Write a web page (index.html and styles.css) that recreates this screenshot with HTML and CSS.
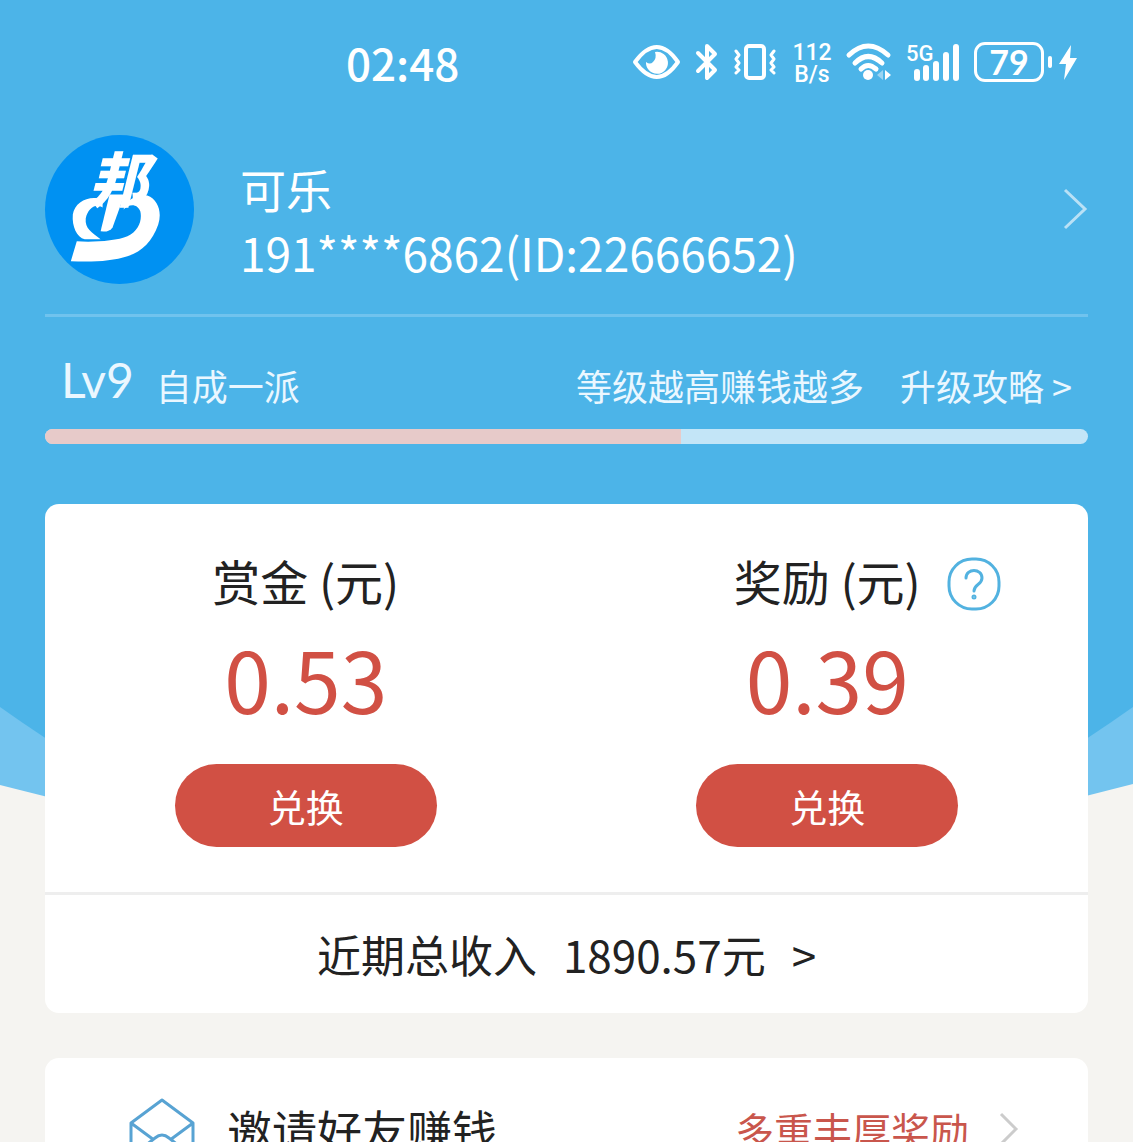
FILE: index.html
```
<!DOCTYPE html>
<html lang="zh-CN">
<head>
  <meta charset="UTF-8">
  <meta name="viewport" content="width=device-width, initial-scale=1">
  <title>我的</title>
  <link rel="stylesheet" href="styles.css">
</head>
<body>
  <!-- Curved header background -->
  <svg class="backdrop" viewBox="0 0 1133 920" preserveAspectRatio="none" aria-hidden="true">
    <path fill="#73c4ef" d="M0 0H1133V784Q566 936 0 785Z"/>
    <path fill="#4cb4e8" d="M0 0H1133V707Q566 1110 0 707Z"/>
  </svg>

  <!-- Status bar -->
  <div class="status-bar">
    <span class="time">02:48</span>
    <div class="status-icons">
      <svg width="48" height="38" viewBox="0 0 48 38">
        <path d="M3 19Q25 -11 46 19Q25 49 3 19Z" fill="none" stroke="#fff" stroke-width="4" stroke-linejoin="round"/>
        <path d="M23 9A11 11 0 1 1 14 19Q18 22 21 19Q25 15 23 9Z" fill="#fff"/>
      </svg>
      <svg width="24" height="38" viewBox="0 0 24 38">
        <path d="M3 10L20 27L12 35V3L20 11L3 28" fill="none" stroke="#fff" stroke-width="4" stroke-linecap="round" stroke-linejoin="round"/>
      </svg>
      <svg width="44" height="38" viewBox="0 0 44 38" fill="none" stroke="#fff" stroke-width="4" stroke-linecap="round" stroke-linejoin="round">
        <rect x="12" y="3" width="18" height="32" rx="3"/>
        <path stroke-width="3" d="M2 8L5 12L2 16L5 20L2 24L5 27L2 30M40 8L37 12L40 16L37 20L40 24L37 27L40 30"/>
      </svg>
      <div class="speed">
        <span>112</span>
        <span>B/s</span>
      </div>
      <svg width="45" height="38" viewBox="0 0 45 38">
        <path d="M3 12Q22 -6 42 12M9 20Q22 7 36 20M15 26Q22 19 30 26" fill="none" stroke="#fff" stroke-width="5" stroke-linecap="round"/>
        <circle cx="22" cy="32" r="5" fill="#fff"/>
        <path d="M37 27V37L31 32Z" fill="#9bd5f3"/>
        <path d="M39 27V37L45 32Z" fill="#fff"/>
      </svg>
      <svg width="53" height="38" viewBox="0 0 53 38">
        <text class="network" x="0" y="18">5G</text>
        <path d="M11 29V35M20 25V35M30 21V35M40 12V35M50 4V35" stroke="#fff" stroke-width="6" stroke-linecap="round"/>
      </svg>
      <div class="power">
        <span class="battery">79</span>
        <svg width="18" height="38" viewBox="0 0 18 38">
          <path d="M12 2L0 21H7L5 37L18 15H11Z" fill="#fff"/>
        </svg>
      </div>
    </div>
  </div>

  <main>
    <!-- Profile -->
    <a class="profile" href="#">
      <svg class="avatar" viewBox="0 0 150 150" role="img" aria-label="头像">
        <circle cx="75" cy="75" r="75" fill="#0091f2"/>
        <text class="avatar-text" x="44" y="67">邦</text>
        <path d="M65 60H80L68 93Q65 98 56 97Z" fill="#fff"/>
        <path d="M58 65C45 60 30 67 28 80C27 92 32 103 40 105H56C47 98 40 94 41 84C43 75 50 68 58 73Z" fill="#fff"/>
        <path d="M79 75C82 65 92 60 103 61C114 65 118 78 114 90C108 107 98 117 83 122C68 127 48 128 26 127L32 107C47 108 72 107 83 102C94 97 98 86 96 77C93 69 85 69 79 75Z" fill="#fff"/>
      </svg>
      <div class="profile-info">
        <div>可乐</div>
        <div>191****6862(ID:22666652)</div>
      </div>
      <svg class="arrow" width="26" height="44" viewBox="0 0 26 44">
        <path d="M3 3L23 22L3 41"/>
      </svg>
    </a>

    <!-- Level -->
    <section class="level">
      <div class="level-text">
        <span class="level-num">Lv9</span>
        <span>自成一派</span>
        <span class="level-tip">等级越高赚钱越多</span>
        <a href="#">升级攻略 &gt;</a>
      </div>
      <div class="level-bar" role="progressbar" aria-label="等级进度" aria-valuenow="61" aria-valuemin="0" aria-valuemax="100">
        <div class="level-fill" style="width: 61%"></div>
      </div>
    </section>

    <!-- Balance -->
    <section class="card balance">
      <div class="accounts">
        <div class="account">
          <h2><span>赏金 (元)</span></h2>
          <div class="amount">0.53</div>
          <button type="button" class="exchange">兑换</button>
        </div>
        <div class="account">
          <h2>
            <span>奖励 (元)</span>
            <button type="button" class="help" aria-label="奖励说明">
              <svg width="54" height="54" viewBox="0 0 54 54" fill="none" stroke="#52b2e0" stroke-width="3" stroke-linecap="round">
                <rect x="2" y="2" width="50" height="50" rx="23"/>
                <path d="M19 21C19 11 35 11 35 21C35 28 27 27 27 34"/>
                <circle cx="27" cy="40" r="1"/>
              </svg>
            </button>
          </h2>
          <div class="amount">0.39</div>
          <button type="button" class="exchange">兑换</button>
        </div>
      </div>
      <a class="income" href="#">
        <span>近期总收入</span>
        <span>1890.57元</span>
        <span>&gt;</span>
      </a>
    </section>

    <!-- Menu -->
    <nav class="card">
      <a class="menu-item" href="#">
        <svg width="66" height="62" viewBox="0 0 66 62" fill="none" stroke="#58a3d3" stroke-width="3" stroke-linejoin="round">
          <path d="M2 25L33 2L64 25V59H2ZM2 25L25 42M64 25L41 42M2 59L26 40Q33 34 40 40L64 59"/>
        </svg>
        <span>邀请好友赚钱</span>
        <span class="menu-note">多重丰厚奖励</span>
        <svg class="arrow gray" width="20" height="34" viewBox="0 0 20 34">
          <path d="M2 2L17 17L2 32"/>
        </svg>
      </a>
    </nav>
  </main>
</body>
</html>
```
FILE: styles.css
```
/* Basic reset */
* {
  box-sizing: border-box;
}
body {
  margin: 0;
  height: 100vh;
  overflow: hidden;
  position: relative;
  display: flex;
  flex-direction: column;
  background: #f5f4f1;
  color: #222;
  font-family: "Noto Sans CJK SC", sans-serif;
}
a {
  color: inherit;
  text-decoration: none;
}
button {
  font-family: inherit;
  border: none;
  padding: 0;
  cursor: pointer;
}
svg {
  display: block;
  flex-shrink: 0;
  overflow: visible;
}
.backdrop {
  position: absolute;
  top: 0;
  left: 0;
  width: 100%;
  height: 920px;
  z-index: -1;
}
/* Status bar */
.status-bar {
  display: flex;
  justify-content: space-between;
  align-items: center;
  flex-shrink: 0;
  height: 124px;
  padding: 0 56px 0 30%;
  color: #fff;
}
.time {
  font-size: 44px;
  font-weight: 500;
  padding-left: 6px;
}
.status-icons {
  display: flex;
  align-items: center;
  gap: 15px;
}
.speed {
  display: flex;
  flex-direction: column;
  align-items: center;
  width: 38px;
  padding-top: 4px;
  font-family: Roboto, sans-serif;
  font-size: 23px;
  font-weight: 500;
  line-height: 22px;
}
.network {
  font-family: Roboto, sans-serif;
  font-size: 22px;
  font-weight: 500;
  fill: #fff;
}
.power {
  display: flex;
  align-items: center;
  gap: 7px;
}
.battery {
  position: relative;
  width: 70px;
  height: 40px;
  margin-right: 8px;
  border: 3px solid #fff;
  border-radius: 11px;
  font-family: Lato, sans-serif;
  font-size: 34px;
  font-weight: 700;
  line-height: 34px;
  text-align: center;
}
.battery::after {
  content: "";
  position: absolute;
  top: 11px;
  right: -11px;
  width: 4px;
  height: 12px;
  border-radius: 2px;
  background: #fff;
}
main {
  flex: 1;
  min-height: 0;
  overflow-y: auto;
  scrollbar-width: none;
  padding: 10px 45px 0;
}
/* Profile */
.profile {
  display: flex;
  align-items: center;
  padding-bottom: 30px;
  border-bottom: 3px solid #70c3ee;
  color: #fff;
}
.avatar {
  width: 149px;
  height: 149px;
}
.avatar-text {
  font-size: 60px;
  font-weight: 900;
  font-style: italic;
  fill: #fff;
}
.profile-info {
  flex: 1;
  padding: 22px 0 0 46px;
  font-size: 46px;
  line-height: 64px;
}
.arrow path {
  fill: none;
  stroke: #b9e1f6;
  stroke-width: 3;
}
.arrow.gray path {
  stroke: #ccc;
}
/* Level */
.level {
  padding: 32px 0 60px;
  color: #eaf7ff;
}
.level-text {
  display: flex;
  align-items: flex-start;
  padding: 0 16px;
  font-size: 36px;
  line-height: 72px;
}
.level-num {
  margin-right: 22px;
  font-family: Lato, sans-serif;
  font-size: 48px;
  line-height: 62px;
}
.level-tip {
  margin-left: auto;
  margin-right: 36px;
}
.level-bar {
  height: 15px;
  margin-top: 8px;
  border-radius: 8px;
  overflow: hidden;
  background: #c3e5f7;
}
.level-fill {
  height: 100%;
  background: #e7cac9;
}
/* Cards */
.card {
  margin-bottom: 45px;
  border-radius: 14px;
  background: #fff;
}
.accounts {
  display: grid;
  grid-template-columns: 1fr 1fr;
  padding: 38px 0 45px;
  border-bottom: 3px solid #eee;
}
.account {
  display: flex;
  flex-direction: column;
  align-items: center;
}
.account h2 {
  display: grid;
  grid-template-columns: 1fr auto 1fr;
  align-items: center;
  width: 100%;
  height: 76px;
  margin: 0;
  font-size: 48px;
  font-weight: 400;
}
.account h2 span {
  grid-column: 2;
}
.help {
  width: 54px;
  margin: 8px 0 0 26px;
  background: none;
}
.amount {
  font-size: 84px;
  line-height: 120px;
  margin-bottom: 26px;
  color: #d15044;
}
.exchange {
  width: 262px;
  height: 83px;
  border-radius: 42px;
  background: #d15044;
  color: #fff;
  font-size: 38px;
}
.income {
  display: flex;
  justify-content: center;
  gap: 26px;
  font-size: 44px;
  line-height: 118px;
}
.menu-item {
  display: flex;
  align-items: center;
  height: 142px;
  padding: 0 69px 0 84px;
  font-size: 45px;
}
.menu-item span {
  margin-left: 32px;
}
.menu-item .menu-note {
  margin-left: auto;
  margin-right: 30px;
  color: #c9564c;
  font-size: 39px;
}
```
